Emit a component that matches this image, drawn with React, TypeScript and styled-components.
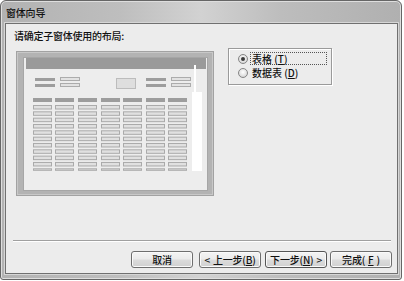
import React from "react";
import styled, { createGlobalStyle } from "styled-components";

const Global = createGlobalStyle`
  html, body { margin: 0; padding: 0; background: #ffffff; }
  body { font-family: "Noto Sans CJK SC", "Noto Sans", sans-serif; }
  #root { width: 404px; height: 281px; }
`;

const Window = styled.div`
  box-sizing: border-box;
  width: 402px;
  height: 280px;
  border: 1px solid #666666;
  border-radius: 6px 6px 3px 3px;
  background: linear-gradient(90deg, #b2b2b2 0%, #bebebe 30%, #d2d2d2 50%, #bdbdbd 70%, #b0b0b0 100%);
  display: flex;
  flex-direction: column;
  box-shadow: inset 0 0 0 1px #dedede;
`;

const TitleBar = styled.div`
  height: 22px;
  flex: none;
  display: flex;
  align-items: center;
  padding-left: 5px;
  font-size: 10px;
  font-weight: 500;
  color: #111111;
  letter-spacing: -0.2px;
`;

const Panel = styled.div`
  flex: 1;
  margin: 0 3px 5px 4px;
  border: 1px solid #707070;
  background: #ececec;
  display: flex;
  flex-direction: column;
  box-shadow: 0 0 0 1px #d6d6d6;
`;

const Heading = styled.div`
  padding: 5px 8px 0 8px;
  line-height: 14px;
  font-size: 10px;
  font-weight: 500;
  color: #111111;
  letter-spacing: -0.25px;
`;

const ContentRow = styled.div`
  display: flex;
  align-items: flex-start;
  margin-top: 5px;
  padding-left: 10px;
  gap: 14px;
`;

const Preview = styled.svg`
  display: block;
  margin-top: 3px;
  flex: none;
`;

const RadioBox = styled.div`
  box-sizing: border-box;
  width: 104px;
  height: 37px;
  border: 1px solid #9a9a9a;
  box-shadow: inset 1px 1px 0 #ffffff, 1px 1px 0 #ffffff;
  display: flex;
  flex-direction: column;
  padding: 3px 4px 0 9px;
  gap: 1px;
`;

const RadioRow = styled.div`
  display: flex;
  align-items: center;
  height: 13px;
  gap: 2px;
`;

const RadioDot = styled.span<{ $checked?: boolean }>`
  box-sizing: border-box;
  width: 10px;
  height: 10px;
  border-radius: 50%;
  border: 1px solid #858585;
  background: radial-gradient(circle at 50% 40%, #ffffff 0%, #e0e0e0 60%, #c6c6c6 100%);
  display: flex;
  align-items: center;
  justify-content: center;
  flex: none;
  &::after {
    content: "";
    width: 4px;
    height: 4px;
    border-radius: 50%;
    background: ${(p) => (p.$checked ? "#3a3a3a" : "transparent")};
  }
`;

const RadioLabel = styled.span<{ $focused?: boolean }>`
  box-sizing: border-box;
  font-size: 10px;
  font-weight: 500;
  line-height: 11px;
  color: #111111;
  padding: 0 1px;
  border: 1px ${(p) => (p.$focused ? "dotted #555" : "solid transparent")};
  ${(p) => (p.$focused ? "flex: 1;" : "")}
`;

const U = styled.span`
  text-decoration: underline;
`;

const Spacer = styled.div`
  flex: 1;
`;

const Separator = styled.div`
  height: 1px;
  margin: 0 6px 0 7px;
  background: #a0a0a0;
  border-bottom: 1px solid #ffffff;
`;

const ButtonRow = styled.div`
  display: flex;
  justify-content: flex-end;
  margin-top: 9px;
  padding: 0 5px 5px 0;
`;

const Button = styled.button<{ $gap: number; $default?: boolean }>`
  box-sizing: border-box;
  width: 62px;
  height: 17px;
  margin-left: ${(p) => p.$gap}px;
  padding: 0;
  border: 1px solid ${(p) => (p.$default ? "#555555" : "#6e6e6e")};
  border-radius: 3px;
  background: linear-gradient(180deg, #f4f4f4 0%, #ebebeb 48%, #dcdcdc 52%, #d0d0d0 100%);
  box-shadow: inset 0 0 0 1px #fafafa;
  font-family: "Noto Sans CJK SC", "Noto Sans", sans-serif;
  font-size: 10px;
  font-weight: 500;
  line-height: 15px;
  color: #111111;
  letter-spacing: -0.2px;
  display: flex;
  align-items: center;
  justify-content: center;
  gap: 3px;
`;

const colX = [17, 39, 62, 85, 107, 130, 152];
const rowYs = Array.from({ length: 11 }, (_, i) => 54 + i * 6.33);

function LayoutPreview() {
  return (
    <Preview width={198} height={145} viewBox="0 0 198 145">
      <rect x={0.5} y={0.5} width={197} height={144} fill="#b3b3b3" stroke="#a2a2a2" />
      <rect x={1.5} y={1.5} width={195} height={142} fill="none" stroke="#c8c8c8" />
      <rect x={7.5} y={6.5} width={184} height={133} fill="#ededed" stroke="#a6a6a6" />
      <rect x={10} y={7} width={180} height={11} fill="#9a9a9a" />
      <rect x={19} y={27} width={20} height={3} fill="#9d9d9d" />
      <rect x={19} y={33} width={20} height={3} fill="#9d9d9d" />
      <rect x={44.5} y={26.5} width={19} height={3} fill="#e2e2e2" stroke="#acacac" />
      <rect x={44.5} y={32.5} width={19} height={3} fill="#e2e2e2" stroke="#acacac" />
      <rect x={100.5} y={27.5} width={19} height={10} fill="#dedede" stroke="#bcbcbc" />
      <rect x={130} y={27} width={20} height={3} fill="#9d9d9d" />
      <rect x={130} y={33} width={20} height={3} fill="#9d9d9d" />
      <rect x={155.5} y={26.5} width={19} height={3} fill="#e2e2e2" stroke="#acacac" />
      <rect x={155.5} y={32.5} width={19} height={3} fill="#e2e2e2" stroke="#acacac" />
      <rect x={178} y={14} width={2} height={27} fill="#ffffff" />
      <rect x={176} y={41} width={10} height={79} fill="#ffffff" />
      {colX.map((x) => (
        <rect key={"h" + x} x={x} y={47} width={19} height={4} fill="#9d9d9d" />
      ))}
      {colX.map((x) =>
        rowYs.map((y, i) => (
          <rect
            key={x + "-" + i}
            x={x + 0.5}
            y={y + 0.5}
            width={18}
            height={i === rowYs.length - 1 ? 1.5 : 3.5}
            fill="#e0e0e0"
            stroke="#aaaaaa"
          />
        ))
      )}
    </Preview>
  );
}

export default function App() {
  return (
    <>
      <Global />
      <Window>
        <TitleBar>窗体向导</TitleBar>
        <Panel>
          <Heading>请确定子窗体使用的布局:</Heading>
          <ContentRow>
            <LayoutPreview />
            <RadioBox>
              <RadioRow>
                <RadioDot $checked />
                <RadioLabel $focused>
                  表格 (<U>T</U>)
                </RadioLabel>
              </RadioRow>
              <RadioRow>
                <RadioDot />
                <RadioLabel>
                  数据表 (<U>D</U>)
                </RadioLabel>
              </RadioRow>
            </RadioBox>
          </ContentRow>
          <Spacer />
          <Separator />
          <ButtonRow>
            <Button $gap={0}>取消</Button>
            <Button $gap={6}>
              <span>&lt;</span>
              <span>
                上一步(<U>B</U>)
              </span>
            </Button>
            <Button $gap={4} $default>
              <span>
                下一步(<U>N</U>)
              </span>
              <span>&gt;</span>
            </Button>
            <Button $gap={3}>
              完成(<U>F</U>)
            </Button>
          </ButtonRow>
        </Panel>
      </Window>
    </>
  );
}
